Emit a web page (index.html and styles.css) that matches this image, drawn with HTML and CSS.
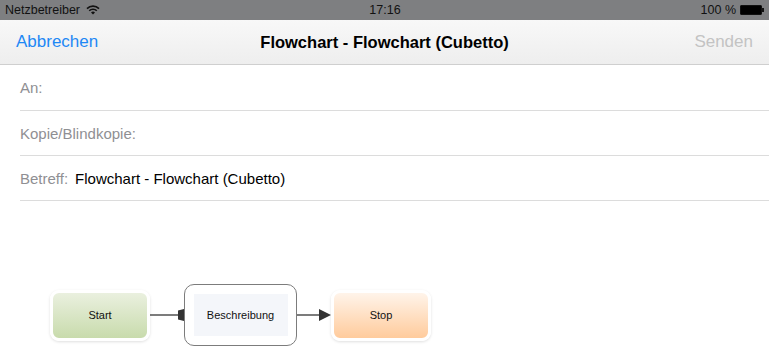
FILE: index.html
```html
<!DOCTYPE html>
<html lang="de">
<head>
    <meta charset="UTF-8">
    <meta name="viewport" content="width=device-width, initial-scale=1.0">
    <title>Flowchart - Flowchart (Cubetto)</title>
    <link rel="stylesheet" href="styles.css">
</head>
<body>
    <div class="status-bar">
        <div class="carrier">
            Netzbetreiber
            <svg class="wifi" width="14" height="10" viewBox="0 0 14 10">
                <path d="M1 3.6 A8.5 8.5 0 0 1 13 3.6" fill="none" stroke="#111" stroke-width="1.6"/>
                <path d="M3.2 5.8 A5.4 5.4 0 0 1 10.8 5.8" fill="none" stroke="#111" stroke-width="1.6"/>
                <path d="M7 9.6 L5 7.6 A2.8 2.8 0 0 1 9 7.6 Z" fill="#111"/>
            </svg>
        </div>
        <div class="clock">17:16</div>
        <div class="battery-info">
            100 %
            <span class="battery"><span class="battery-level"></span></span>
        </div>
    </div>

    <div class="nav-bar">
        <span class="nav-button">Abbrechen</span>
        <span class="nav-title">Flowchart - Flowchart (Cubetto)</span>
        <span class="nav-button disabled">Senden</span>
    </div>

    <div class="fields">
        <div class="field-row first"><span class="field-label">An:</span></div>
        <div class="field-row"><span class="field-label">Kopie/Blindkopie:</span></div>
        <div class="field-row">
            <span class="field-label">Betreff:</span>
            <span class="field-value">Flowchart - Flowchart (Cubetto)</span>
        </div>
    </div>

    <div class="diagram">
        <div class="node node-start">Start</div>
        <svg class="arrow" width="34" height="14" viewBox="0 0 34 14">
            <line x1="0" y1="7" x2="29" y2="7" stroke="#444" stroke-width="1.4"/>
            <polygon points="28,2.5 34,1 34,13 28,11.5" fill="#333"/>
        </svg>
        <div class="node-process">
            <div class="process-inner">Beschreibung</div>
        </div>
        <svg class="arrow" width="34" height="14" viewBox="0 0 34 14">
            <line x1="0" y1="7" x2="24" y2="7" stroke="#444" stroke-width="1.4"/>
            <polygon points="22,1 34,7 22,13" fill="#333"/>
        </svg>
        <div class="node node-stop">Stop</div>
    </div>
</body>
</html>
```

FILE: styles.css
```css
body {
    margin: 0;
    padding: 0;
    width: 769px;
    height: 347px;
    overflow: hidden;
    background-color: #ffffff;
    font-family: "Liberation Sans", Arial, sans-serif;
    color: #000;
}

/* status bar */

.status-bar {
    height: 20px;
    background-color: #7e7f81;
    display: grid;
    grid-template-columns: 1fr auto 1fr;
    align-items: center;
    padding: 0 4px 0 5px;
    font-size: 12.5px;
    color: #111;
}

.carrier {
    display: flex;
    align-items: center;
    gap: 6px;
}

.clock {
    text-align: center;
}

.battery-info {
    display: flex;
    align-items: center;
    justify-content: flex-end;
    gap: 4px;
}

.battery {
    position: relative;
    display: inline-block;
    width: 20px;
    height: 8px;
    border: 1px solid #111;
    border-radius: 1px;
    margin-right: 3px;
}

.battery::after {
    content: "";
    position: absolute;
    right: -3px;
    top: 2px;
    width: 2px;
    height: 4px;
    background-color: #111;
}

.battery-level {
    display: block;
    width: 100%;
    height: 100%;
    background-color: #000;
}

/* navigation bar */

.nav-bar {
    height: 44px;
    display: grid;
    grid-template-columns: 1fr auto 1fr;
    align-items: center;
    padding: 0 16px;
    background: linear-gradient(#f8f8f8, #eeeeee);
    border-bottom: 1px solid #cfcfcf;
    font-size: 17px;
}

.nav-button {
    color: #1e88f5;
}

.nav-button.disabled {
    color: #c3c3c3;
    text-align: right;
}

.nav-title {
    font-size: 16.5px;
    font-weight: bold;
}

/* mail fields */

.fields {
    padding-left: 20px;
}

.field-row {
    height: 44px;
    display: flex;
    align-items: center;
    gap: 7px;
    border-bottom: 1px solid #dcdcdc;
    font-size: 15px;
}

.field-row.first {
    height: 45px;
}

.field-label {
    color: #8f8f93;
}

/* flowchart */

.diagram {
    display: flex;
    align-items: center;
    padding: 83px 0 0 50px;
}

.node {
    width: 94px;
    height: 45px;
    border: 3px solid #fff;
    border-radius: 9px;
    box-shadow: 0 1px 3px rgba(0, 0, 0, 0.13);
    display: flex;
    align-items: center;
    justify-content: center;
    font-size: 11px;
    color: #111;
}

.node-start {
    background: linear-gradient(#eaf0df, #c8dbac);
}

.node-stop {
    background: linear-gradient(#fff4ea, #ffcb9c);
}

.node-process {
    width: 111px;
    height: 60px;
    border: 1px solid #7c7c7c;
    border-radius: 10px;
    background-color: #fff;
    display: flex;
    align-items: center;
    justify-content: center;
}

.process-inner {
    width: 94px;
    height: 42px;
    background-color: #f4f6fa;
    display: flex;
    align-items: center;
    justify-content: center;
    font-size: 11px;
    color: #111;
}

.arrow {
    display: block;
}
```
